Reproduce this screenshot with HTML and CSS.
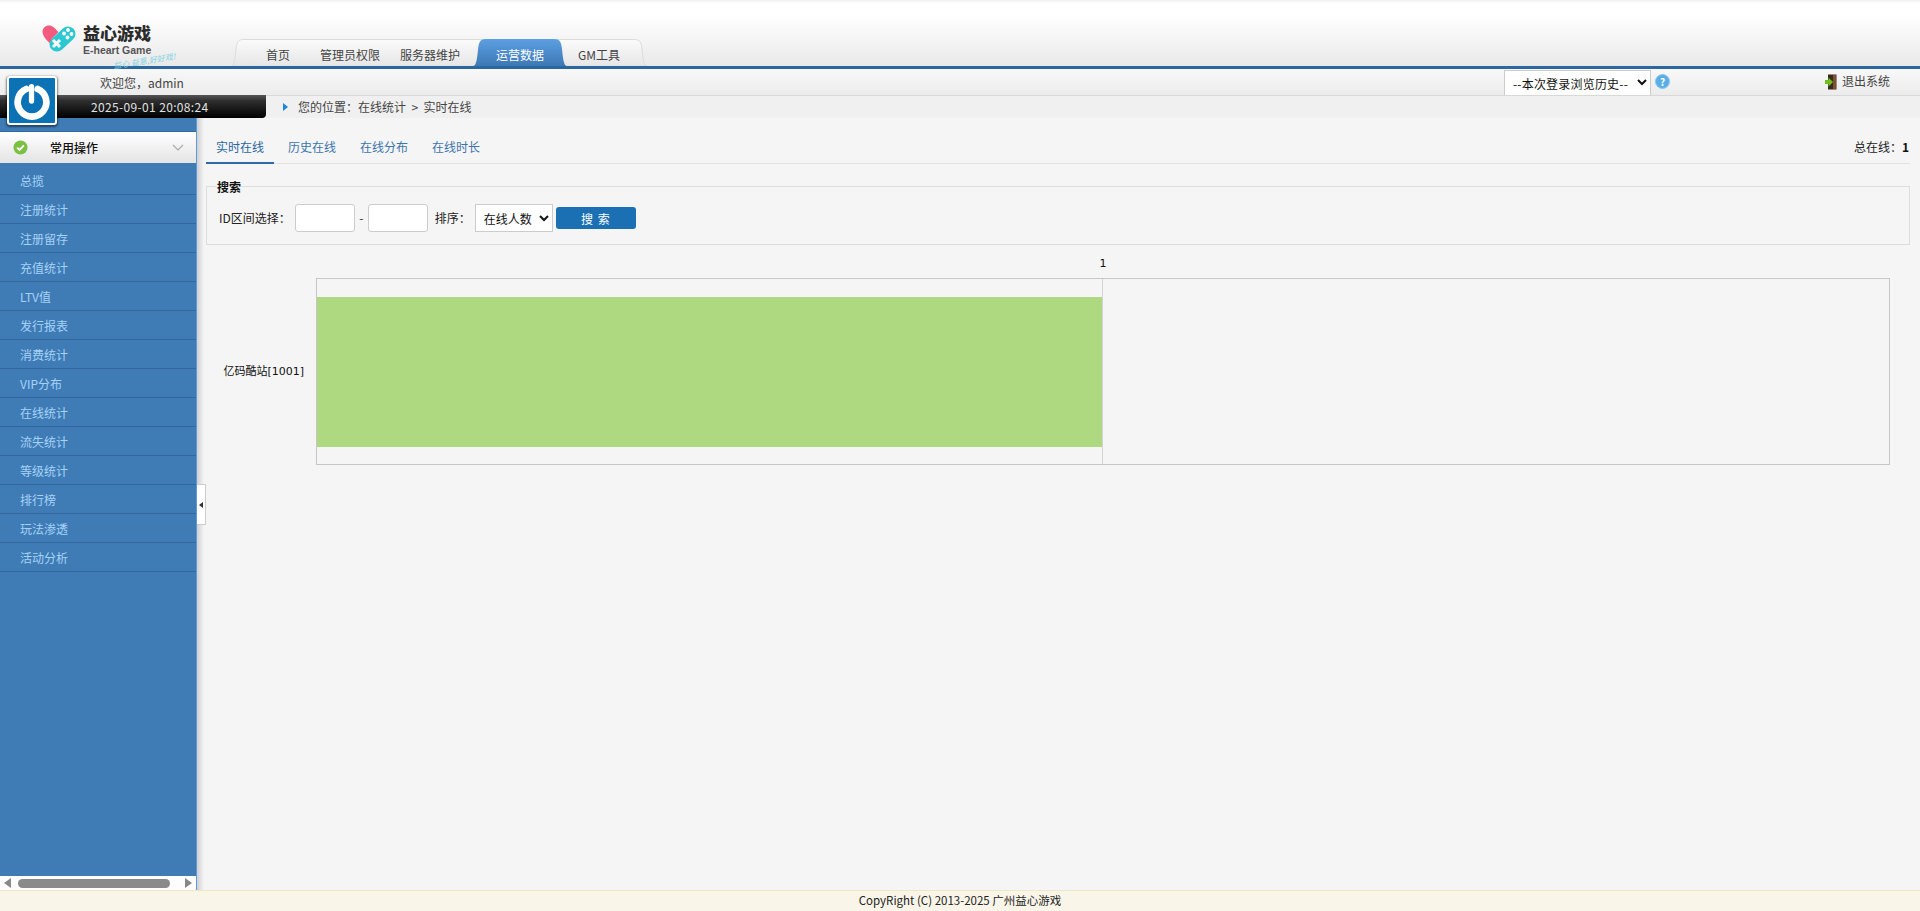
FILE: index.html
```html
<!DOCTYPE html>
<html lang="zh-CN">
<head>
<meta charset="utf-8">
<title>益心游戏</title>
<link rel="stylesheet" href="styles.css">
</head>
<body>
<header class="head">
  <div class="logo">
    <svg class="logo-mark" viewBox="0 0 36 28" width="36" height="28">
      <path d="M17 26 C10 21 1 15 0.5 8 C0.3 2.5 7 -1 12 3.5 C14 5.5 15 6.5 16.5 8 L9.5 15 Z" fill="#f25b7d"/>
      <rect x="5.5" y="7.5" width="30" height="15" rx="7.5" transform="rotate(-43 20.5 15)" fill="#2bc8d2"/>
      <circle cx="26" cy="6" r="1.9" fill="#fff"/>
      <circle cx="29.5" cy="10" r="1.9" fill="#fff"/>
      <circle cx="22" cy="9.5" r="1.9" fill="#fff"/>
      <circle cx="25.5" cy="13.5" r="1.9" fill="#fff"/>
      <path d="M11 16 L18 23 M18 16 L11 23" stroke="#fff" stroke-width="3" fill="none"/>
    </svg>
    <div class="logo-text">
      <strong class="logo-cn">益心游戏</strong>
      <span class="logo-en">E-heart Game</span>
      <span class="logo-slogan">益心 益意,好好戏!</span>
    </div>
  </div>
  <nav class="nav">
    <svg class="nav-bg" viewBox="0 0 417 27" preserveAspectRatio="none">
      <defs><linearGradient id="navg" x1="0" y1="0" x2="0" y2="1"><stop offset="0" stop-color="#fbfbfb"/><stop offset="1" stop-color="#e6e6e6"/></linearGradient></defs>
      <path d="M0.5 27 C3 27 4 21 5 10 C6 3 7 0.5 13 0.5 H403 C409 0.5 410 3 411 10 C412 21 413 27 416.5 27 Z" fill="url(#navg)" stroke="#dcdcdc"/>
    </svg>
    <a class="nav-item first">首页</a>
    <a class="nav-item">管理员权限</a>
    <a class="nav-item">服务器维护</a>
    <a class="nav-item on">运营数据</a>
    <a class="nav-item">GM工具</a>
  </nav>
</header>

<div class="bar">
  <span class="welcome">欢迎您，admin</span>
  <select class="history"><option>--本次登录浏览历史--</option></select>
  <span class="help">?</span>
  <a class="logout">
    <svg viewBox="0 0 12 16" width="12" height="16">
      <path d="M3 0.5 H11.5 V15.5 H3 Z" fill="#3a2a20"/>
      <path d="M8 1 H11 V15 H8 Z" fill="#7a5230"/>
      <path d="M0 6 H3.5 V3.5 L8 8 L3.5 12.5 V10 H0 Z" fill="#6fc01e"/>
    </svg>
    退出系统
  </a>
</div>

<div class="crumbs">
  <div class="clock">2025-09-01 20:08:24</div>
  <div class="path"><i class="path-arrow"></i>您的位置：在线统计 &nbsp;&gt;&nbsp; 实时在线</div>
</div>

<a class="power">
  <svg viewBox="0 0 46 46" width="44" height="44">
    <path d="M29 10.5 A15 15 0 1 1 17 10.5" fill="none" stroke="#fff" stroke-width="7" stroke-linecap="round"/>
    <path d="M22.5 8 V23" fill="none" stroke="#fff" stroke-width="5.5" stroke-linecap="round"/>
  </svg>
</a>

<main class="main">
  <aside class="side">
    <div class="side-top"></div>
    <div class="side-head">
      <svg class="side-check" viewBox="0 0 16 16" width="15" height="15">
        <circle cx="8" cy="8" r="7.5" fill="#79c043"/>
        <path d="M4.5 8.2 L7 10.6 L11.6 5.8" stroke="#fff" stroke-width="2" fill="none"/>
      </svg>
      <span class="side-title">常用操作</span>
      <svg class="side-chev" viewBox="0 0 12 7" width="12" height="7"><path d="M1 1 L6 6 L11 1" stroke="#aaa" stroke-width="1.2" fill="none"/></svg>
    </div>
    <ul class="menu">
      <li>总揽</li>
      <li>注册统计</li>
      <li>注册留存</li>
      <li>充值统计</li>
      <li>LTV值</li>
      <li>发行报表</li>
      <li>消费统计</li>
      <li>VIP分布</li>
      <li>在线统计</li>
      <li>流失统计</li>
      <li>等级统计</li>
      <li>排行榜</li>
      <li>玩法渗透</li>
      <li>活动分析</li>
    </ul>
    <div class="hscroll">
      <i class="hs-left"></i>
      <i class="hs-thumb"></i>
      <i class="hs-right"></i>
    </div>
  </aside>
  <a class="collapse"><i></i></a>

  <section class="content">
    <div class="tabs">
      <a class="tab on">实时在线</a>
      <a class="tab">历史在线</a>
      <a class="tab">在线分布</a>
      <a class="tab">在线时长</a>
      <span class="total">总在线：<b>1</b></span>
    </div>

    <fieldset class="search">
      <legend>搜索</legend>
      <div class="search-row">
        <label class="lab">ID区间选择：</label>
        <input class="num" type="text">
        <span class="dash">-</span>
        <input class="num" type="text">
        <label class="lab sort">排序：</label>
        <select class="order"><option>在线人数</option></select>
        <button class="btn" type="button">搜 索</button>
      </div>
    </fieldset>

    <div class="chart">
      <div class="tick">1</div>
      <div class="chart-label">亿码酷站[1001]</div>
      <div class="plot">
        <div class="cell"><div class="barfill"></div></div>
        <div class="cell"></div>
      </div>
    </div>
  </section>
</main>

<footer class="foot">CopyRight (C) 2013-2025 广州益心游戏</footer>
</body>
</html>
```

FILE: styles.css
```css
* { box-sizing: border-box; }
html, body { height: 100%; }
body {
  margin: 0;
  height: 100vh;
  overflow: hidden;
  display: flex;
  flex-direction: column;
  position: relative;
  background: #f5f5f5;
  color: #333;
  font: 12px/16px "Noto Sans CJK SC", "Open Sans", sans-serif;
}

/* header */
.head {
  height: 69px;
  flex: none;
  display: flex;
  align-items: flex-end;
  border-bottom: 3px solid #2a669f;
  background: linear-gradient(#f0f0f0 0, #fff 3px, #fff 15px, #e9e9e9 100%);
}
.logo {
  width: 231px;
  flex: none;
  height: 66px;
  padding: 24px 0 0 42px;
  display: flex;
}
.logo-mark { flex: none; }
.logo-text {
  margin-left: 5px;
  display: flex;
  flex-direction: column;
  position: relative;
}
.logo-cn { font-size: 17px; line-height: 17px; color: #2b2b2b; letter-spacing: 0; font-weight: 900; }
.logo-en { font: bold 10.5px/12px "Liberation Sans", sans-serif; color: #555; margin-top: 3px; }
.logo-slogan {
  position: absolute;
  left: 30px;
  top: 32px;
  font-size: 8px;
  line-height: 10px;
  white-space: nowrap;
  color: #7dd3e2;
  transform: rotate(-9deg);
  font-style: italic;
}
.nav {
  position: relative;
  display: flex;
  height: 27px;
  width: 417px;
  padding: 0 16px 0 25px;
  margin-bottom: 0;
}
.nav-bg { position: absolute; left: 0; top: 0; width: 417px; height: 27px; }
.nav-item {
  position: relative;
  padding: 6px 10px 0;
  height: 27px;
  line-height: 20px;
  color: #444;
  white-space: nowrap;
}
.nav-item.first { margin-right: 10px; }
.nav-item.on {
  padding: 6px 23px 0;
  margin: 0 1px 0 3px;
  color: #fff;
  background: linear-gradient(#5c9fe2, #3c78b4);
  clip-path: path("M0 27 C3 27 4 21 5 10 C6 3 7 0 13 0 H81 C87 0 88 3 89 10 C90 21 91 27 94 27 Z");
}

/* second bar */
.bar {
  height: 26px;
  flex: none;
  display: flex;
  align-items: flex-start;
  padding-left: 100px;
  background: linear-gradient(#f8f8f8, #ececec);
}
.welcome { line-height: 27px; color: #444; }
.history {
  margin: 1px 0 0 auto;
  width: 147px;
  height: 25px;
  padding: 0 0 0 4px;
  font: 12px "Noto Sans CJK SC", sans-serif;
  letter-spacing: .2px;
  color: #111;
  background: #fff;
  border: 1px solid #ccc;
  border-bottom: 0;
  border-radius: 0;
}
.help {
  width: 15px;
  height: 15px;
  margin: 5px 0 0 4px;
  border-radius: 50%;
  background: #5aaee8;
  border: 1px solid #8cc8ef;
  color: #fff;
  font-size: 10px;
  line-height: 13px;
  text-align: center;
  font-weight: bold;
}
.logout {
  margin: 3px 30px 0 155px;
  display: flex;
  align-items: center;
  gap: 5px;
  color: #444;
}
.logout svg { margin-top: 2px; }

/* breadcrumb row */
.crumbs { height: 23px; flex: none; display: flex; }
.clock {
  width: 266px;
  flex: none;
  background: linear-gradient(#555 0, #2e2e2e 25%, #000 100%);
  color: #e0e0e0;
  padding-left: 91px;
  line-height: 23px;
  letter-spacing: .35px;
  border-radius: 0 0 4px 0;
}
.path {
  flex: 1;
  display: flex;
  align-items: center;
  padding-left: 17px;
  background: #f0f0f0;
  border-top: 1px solid #d8d8d8;
  color: #444;
}
.path-arrow {
  border-left: 5px solid #1a86dc;
  border-top: 4px solid transparent;
  border-bottom: 4px solid transparent;
  margin-right: 10px;
}

/* power button */
.power {
  position: absolute;
  z-index: 3;
  left: 7px;
  top: 76px;
  width: 50px;
  height: 49px;
  background: #0b72b6;
  border: 2px solid #fff;
  border-radius: 3px;
  box-shadow: 0 1px 2px 1px rgba(0, 0, 0, .45);
  display: flex;
  align-items: center;
  justify-content: center;
}

/* main */
.main { flex: 1; display: flex; min-height: 0; position: relative; }
.side {
  width: 197px;
  flex: none;
  display: flex;
  flex-direction: column;
  background: #3f7cb6;
  border-right: 1px solid #5b9bdc;
}
.side-top { height: 14px; flex: none; border-bottom: 1px solid #2f6aa3; }
.side-head {
  height: 31px;
  flex: none;
  display: flex;
  align-items: center;
  padding: 0 12px 0 13px;
  margin-bottom: 3px;
  background: linear-gradient(#fff, #e4e4e4);
  color: #111;
}
.side-title { margin-left: 22px; font-weight: 500; }
.side-chev { margin-left: auto; }
.menu { list-style: none; margin: 0; padding: 0; flex: 1; }
.menu li {
  height: 29px;
  line-height: 29px;
  padding-left: 20px;
  color: #a6d2f7;
  border-bottom: 1px solid #30689e;
}
.hscroll {
  height: 14px;
  flex: none;
  background: #fdfdfd;
  display: flex;
  align-items: center;
  padding: 0 4px;
}
.hs-left { border-right: 7px solid #888; border-top: 5px solid transparent; border-bottom: 5px solid transparent; }
.hs-thumb { width: 152px; height: 9px; margin: 0 auto 0 7px; border-radius: 5px; background: #8a8a8a; }
.hs-right { border-left: 7px solid #888; border-top: 5px solid transparent; border-bottom: 5px solid transparent; }

.collapse {
  position: absolute;
  left: 197px;
  top: 366px;
  width: 9px;
  height: 41px;
  background: #fff;
  border: 1px solid #ccc;
  border-left: 0;
  display: flex;
  align-items: center;
  justify-content: center;
}
.collapse i { border-right: 4px solid #333; border-top: 3px solid transparent; border-bottom: 3px solid transparent; }

.content {
  flex: 1;
  padding: 15px 10px 0 9px;
  background: linear-gradient(90deg, #cfcfcf 0, #f5f5f5 7px);
}
.tabs {
  height: 31px;
  display: flex;
  border-bottom: 1px solid #e2e2e2;
}
.tab {
  width: 68px;
  height: 31px;
  margin-right: 4px;
  line-height: 28px;
  text-align: center;
  color: #3c74ad;
  border-bottom: 2px solid transparent;
}
.tab.on { color: #2a669f; border-bottom-color: #2a6aa8; }
.total { margin-left: auto; line-height: 28px; color: #222; padding-right: 1px; }
.total b { color: #111; }

.search {
  margin: 13px 0 0;
  padding: 9px 12px 12px;
  border: 1px solid #ddd;
  min-width: 0;
}
.search legend {
  margin-left: -2px;
  padding: 2px 0 0;
  font-weight: bold;
  color: #111;
}
.search-row { display: flex; align-items: center; height: 28px; }
.lab { color: #222; }
.num {
  width: 60px;
  height: 28px;
  margin-left: 4px;
  border: 1px solid #ccc;
  border-radius: 3px;
  background: #fff;
}
.dash { width: 13px; text-align: center; }
.dash + .num { margin-left: 0; }
.sort { margin-left: 7px; }
.order {
  width: 78px;
  height: 28px;
  margin-left: 4px;
  padding: 0 0 0 4px;
  border: 1px solid #ccc;
  border-radius: 0;
  background: #fff;
  color: #111;
  font: 12px "Noto Sans CJK SC", sans-serif;
}
.btn {
  width: 80px;
  height: 22px;
  margin-left: 3px;
  padding: 0;
  border: 0;
  border-radius: 3px;
  background: #1b6fb3;
  color: #fff;
  font: 12px "Noto Sans CJK SC", sans-serif;
  letter-spacing: 1px;
}

.chart {
  display: grid;
  grid-template-columns: 110px 1fr 20px;
  grid-template-rows: 33px 187px;
  font: 11px/16px "DejaVu Sans", "Noto Sans CJK SC", sans-serif;
  color: #111;
  margin-top: 0;
}
.tick { grid-column: 2; text-align: center; line-height: 38px; }
.chart-label {
  grid-column: 1;
  grid-row: 2;
  align-self: center;
  text-align: right;
  padding-right: 12px;
  white-space: nowrap;
}
.plot {
  grid-column: 2;
  grid-row: 2;
  display: grid;
  grid-template-columns: 1fr 1fr;
  border: 1px solid #c6c6c6;
}
.cell { padding-top: 18px; }
.cell:first-child { border-right: 1px solid #d4d4d4; }
.barfill { height: 150px; background: #aed981; }

.foot {
  height: 21px;
  flex: none;
  text-align: center;
  font-size: 11.5px;
  line-height: 19px;
  border-top: 1px solid #f0e7c4;
  background: #f9f6e9;
  color: #222;
}
```
